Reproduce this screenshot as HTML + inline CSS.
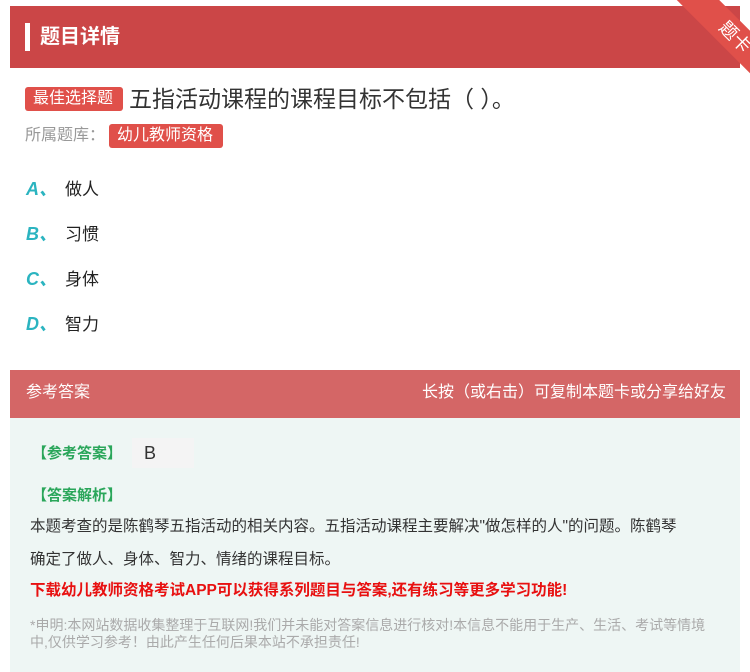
<!DOCTYPE html>
<html><head><meta charset="utf-8"><style>
body{margin:0;width:750px;height:672px;overflow:hidden;background:#fff;font-family:"Liberation Sans","Noto Sans CJK SC",sans-serif;position:relative}
.hd{position:absolute;left:10px;top:6px;width:730px;height:62px;background:#cb4647}
.hd .bar{position:absolute;left:15px;top:17px;width:5px;height:28px;background:#fff}
.hd .t{position:absolute;left:30px;top:14px;color:#fff;font-size:20px;font-weight:bold}
.rib{position:absolute;right:0;top:0;width:95px;height:90px;overflow:hidden}
.rib div{position:absolute;left:10px;top:22px;width:140px;height:30px;background:#e0504a;transform:rotate(45deg);color:#fff;font-size:18px;text-align:center;line-height:30px}
.tag{display:inline-block;background:#e0504a;color:#fff;border-radius:3px;font-size:16px;padding:0 8px;height:24px;line-height:24px}
.q{position:absolute;left:25px;top:80px;font-size:23px;color:#333}
.q .tag{vertical-align:4px;margin-right:6px;width:82px}
.lib{position:absolute;left:25px;top:121px;font-size:16px;color:#999}
.lib .tag{width:98px;margin-left:4px}
.opt{position:absolute;left:26px;font-size:17px;color:#222}
.opt b{color:#2bb4c0;font-style:italic;font-size:18px;margin-right:8px}
.ah{position:absolute;left:10px;top:370px;width:730px;height:48px;background:#d46666;color:#fff;font-size:16px;line-height:46px}
.ab{position:absolute;left:10px;top:418px;width:730px;height:254px;background:#eef6f4}
.g{color:#2aa65a;font-weight:bold;font-size:15px}
</style></head><body>
<div class="hd"><div class="bar"></div><div class="t">题目详情</div></div>
<div class="rib"><div>题卡</div></div>
<div class="q"><span class="tag">最佳选择题</span>五指活动课程的课程目标不包括（ ）。</div>
<div class="lib">所属题库：<span class="tag">幼儿教师资格</span></div>
<div class="opt" style="top:175px"><b>A、</b>做人</div>
<div class="opt" style="top:220px"><b>B、</b>习惯</div>
<div class="opt" style="top:265px"><b>C、</b>身体</div>
<div class="opt" style="top:310px"><b>D、</b>智力</div>
<div class="ah"><span style="margin-left:16px">参考答案</span><span style="float:right;margin-right:14px">长按（或右击）可复制本题卡或分享给好友</span></div>
<div class="ab">
<div class="g" style="position:absolute;left:22px;top:24px">【参考答案】</div>
<div style="position:absolute;left:122px;top:20px;width:62px;height:30px;background:#f4f4f4;font-size:18px;color:#333;padding-left:12px;box-sizing:border-box;line-height:30px">B</div>
<div class="g" style="position:absolute;left:22px;top:66px">【答案解析】</div>
<div style="position:absolute;left:20px;top:92px;width:700px;font-size:15.5px;color:#333;line-height:33px">本题考查的是陈鹤琴五指活动的相关内容。五指活动课程主要解决"做怎样的人"的问题。陈鹤琴<br>确定了做人、身体、智力、情绪的课程目标。</div>
<div style="position:absolute;left:20px;top:160px;font-size:15.5px;color:#e81010;font-weight:bold">下载幼儿教师资格考试APP可以获得系列题目与答案,还有练习等更多学习功能!</div>
<div style="position:absolute;left:20px;top:199px;width:690px;font-size:14px;color:#aaa;line-height:17px">*申明:本网站数据收集整理于互联网!我们并未能对答案信息进行核对!本信息不能用于生产、生活、考试等情境中,仅供学习参考！由此产生任何后果本站不承担责任!</div>
</div>
</body></html>
